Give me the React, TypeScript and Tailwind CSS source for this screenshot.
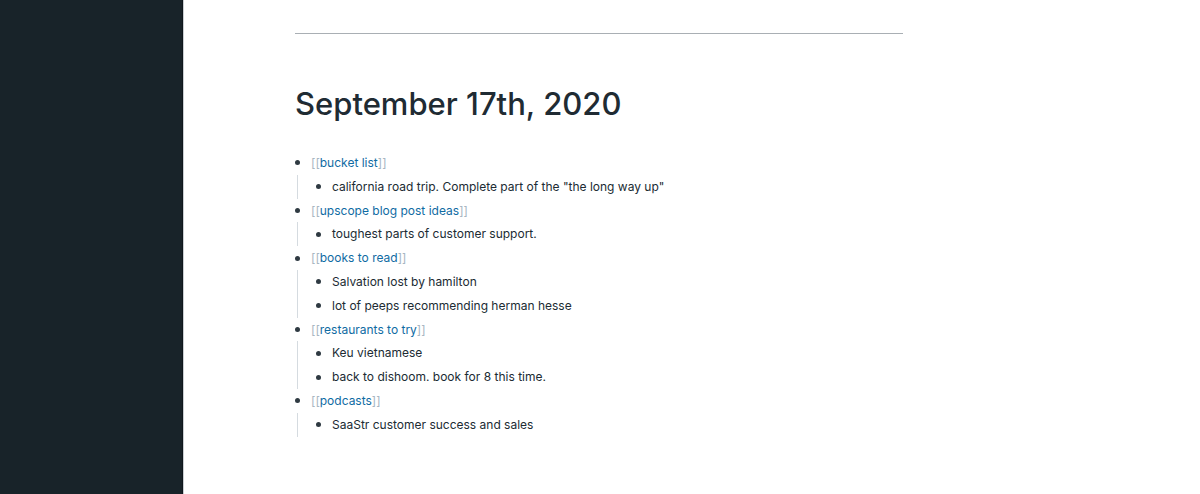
import React from "react";

type Item = { title: string; children: string[] };

const items: Item[] = [
  { title: "bucket list", children: ['california road trip. Complete part of the "the long way up"'] },
  { title: "upscope blog post ideas", children: ["toughest parts of customer support."] },
  { title: "books to read", children: ["Salvation lost by hamilton", "lot of peeps recommending herman hesse"] },
  { title: "restaurants to try", children: ["Keu vietnamese", "back to dishoom. book for 8 this time."] },
  { title: "podcasts", children: ["SaaStr customer success and sales"] },
];

function Bullet() {
  return (
    <div className="w-[16px] h-[23.8px] flex items-center shrink-0">
      <div className="w-[5px] h-[5px] rounded-full bg-[#2f3a42]" />
    </div>
  );
}

export default function App() {
  return (
    <div className="flex w-[1200px] h-[494px] bg-white overflow-hidden" style={{ fontFamily: "Inter, 'Noto Sans', sans-serif" }}>
      <div className="w-[182px] h-full bg-[#182329] shrink-0" />
      <div className="w-[1px] h-full bg-[#10181d] shrink-0" />
      <div className="w-[1px] h-full bg-[#c9ced2] shrink-0" />
      <div className="flex-1 pl-[111px]">
        <div className="w-[608px]">
          <div className="mt-[33px] h-[1px] bg-[#a9afb4]" />
          <h1 className="mt-[50px] text-[31px] leading-[40px] font-medium text-[#202b33]">
            September 17th, 2020
          </h1>
          <div className="mt-[27px] text-[12px] leading-[23.8px] text-[#202b33]">
            {items.map((it) => (
              <div key={it.title}>
                <div className="flex">
                  <Bullet />
                  <div>
                    <span className="text-[#a7b6c2]">[[</span>
                    <span className="text-[#106ba3]">{it.title}</span>
                    <span className="text-[#a7b6c2]">]]</span>
                  </div>
                </div>
                <div className="ml-[2px] border-l border-[#d5dbe0] pl-[18px]">
                  {it.children.map((c) => (
                    <div key={c} className="flex">
                      <Bullet />
                      <div>{c}</div>
                    </div>
                  ))}
                </div>
              </div>
            ))}
          </div>
        </div>
      </div>
    </div>
  );
}
